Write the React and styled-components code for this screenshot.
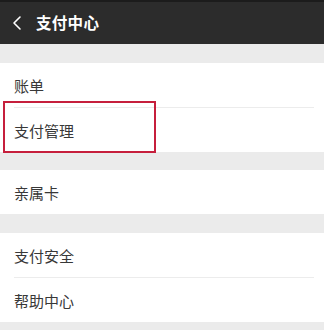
import React from "react";
import styled, { createGlobalStyle } from "styled-components";

const Global = createGlobalStyle`
  html, body { margin: 0; padding: 0; background: #ebebeb; }
  body { font-family: "Noto Sans CJK SC", "Noto Sans", sans-serif; }
`;

const Page = styled.div`
  width: 324px;
  height: 330px;
  overflow: hidden;
  background: #ebebeb;
  display: flex;
  flex-direction: column;
`;

const Header = styled.div`
  height: 44px;
  background: #2c2c2c;
  border-top: 2px solid #1c1c1c;
  box-sizing: border-box;
  display: flex;
  align-items: center;
  padding-left: 11px;
  gap: 13px;
  color: #fff;
`;

const Title = styled.div`
  font-size: 15.5px;
  font-weight: 700;
  letter-spacing: 0.3px;
  line-height: 1;
`;

const Section = styled.div`
  position: relative;
  background: #fff;
  margin-top: ${(p) => p.$gap}px;
  display: flex;
  flex-direction: column;
`;

const Item = styled.div`
  height: 44px;
  display: flex;
  align-items: center;
  font-size: 15px;
  color: #383838;
  margin-left: 14px;
  margin-right: 10px;
  border-top: ${(p) => (p.$line ? "1px solid #ececec" : "none")};
`;

const Highlight = styled.div`
  position: absolute;
  left: 3px;
  top: 38px;
  width: 153px;
  height: 52px;
  box-sizing: border-box;
  border: 2px solid #c61f3c;
  pointer-events: none;
`;

const Back = () => (
  <svg width="12" height="16" viewBox="0 0 12 16">
    <path d="M9 2 L3 8 L9 14" fill="none" stroke="#fff" strokeWidth="1.6" strokeLinecap="round" strokeLinejoin="round" />
  </svg>
);

export default function App() {
  return (
    <>
      <Global />
      <Page>
        <Header>
          <Back />
          <Title>支付中心</Title>
        </Header>
        <Section $gap={19}>
          <Item>账单</Item>
          <Item $line>支付管理</Item>
          <Highlight />
        </Section>
        <Section $gap={18}>
          <Item>亲属卡</Item>
        </Section>
        <Section $gap={19}>
          <Item>支付安全</Item>
          <Item $line>帮助中心</Item>
        </Section>
      </Page>
    </>
  );
}
